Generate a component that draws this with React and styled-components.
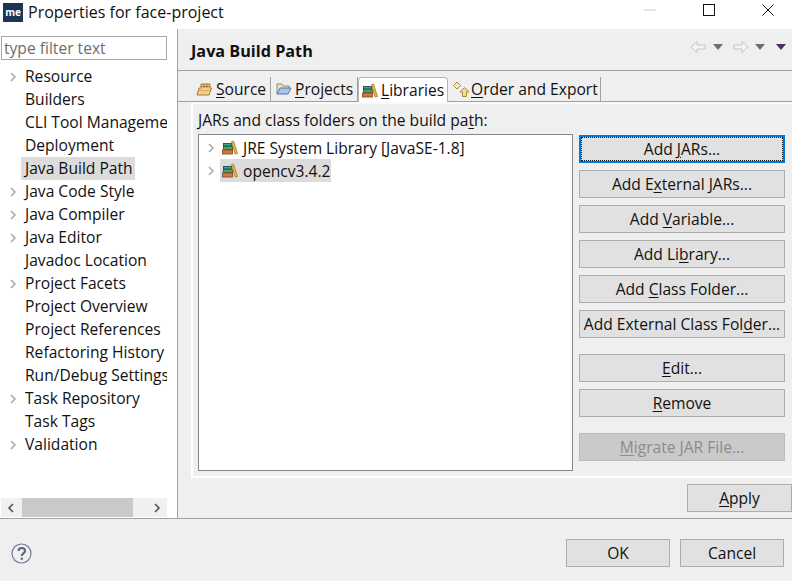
import React from 'react';
import styled, { createGlobalStyle } from 'styled-components';

const GlobalStyle = createGlobalStyle`
  html, body {
    margin: 0;
    padding: 0;
    background: #ffffff;
    font-family: "Open Sans", "Noto Sans", sans-serif;
    font-size: 15.6px;
    color: #111;
  }
  * { box-sizing: border-box; }
`;

const Dialog = styled.div`
  width: 792px;
  height: 581px;
  display: flex;
  flex-direction: column;
  overflow: hidden;
  background: #fff;
`;

// Title bar
const TitleBar = styled.div`
  height: 29px;
  flex: none;
  display: flex;
  align-items: center;
  padding-left: 3px;
  background: #fff;
`;

const AppBadge = styled.span`
  width: 20px;
  height: 19px;
  margin-top: -4px;
  background: #1d3557;
  color: #fff;
  font-size: 10px;
  font-weight: 700;
  line-height: 19px;
  text-align: center;
`;

const TitleText = styled.span`
  margin: -5px 0 0 5px;
  font-size: 16px;
`;

const WindowControls = styled.div`
  margin-left: auto;
  display: flex;
  align-items: center;
  height: 100%;
  padding-right: 18px;
  gap: 47px;
  margin-top: -9px;
`;

// Main split
const Main = styled.div`
  flex: 1;
  min-height: 0;
  display: flex;
  border-bottom: 1px solid #a0a0a0;
`;

const Sidebar = styled.div`
  width: 178px;
  flex: none;
  display: flex;
  flex-direction: column;
  border-right: 1px solid #a0a0a0;
  padding: 7px 10px 0 1px;
`;

const Filter = styled.div`
  height: 24px;
  flex: none;
  border: 1px solid #a8a8a8;
  padding-left: 2px;
  line-height: 22px;
  color: #6d6d6d;
`;

const Tree = styled.div`
  flex: 1;
  min-height: 0;
  overflow: hidden;
  padding-top: 5px;
`;

const NavRow = styled.div`
  height: 23px;
  display: flex;
  align-items: center;
  padding-left: 8px;
  white-space: nowrap;
`;

const Twisty = styled.svg`
  width: 8px;
  height: 10px;
  flex: none;
  margin-top: 1px;
`;

const NavLabel = styled.span`
  padding: ${p => (p.$selected ? '0 2px 0 4px' : '0')};
  margin-left: ${p => (p.$selected ? '12px' : p.$indent ? '16px' : '8px')};
  line-height: 23px;
  background: ${p => (p.$selected ? '#dcdcdc' : 'transparent')};
`;

const HScroll = styled.div`
  height: 19px;
  flex: none;
  background: #f0f0f0;
  display: flex;
  align-items: center;
  justify-content: space-between;
  position: relative;
  padding: 0 6px;
  margin-bottom: 1px;
`;

const HThumb = styled.div`
  position: absolute;
  left: 21px;
  top: 0;
  width: 111px;
  height: 19px;
  background: #c9c9c9;
`;

// Right pane
const Content = styled.div`
  flex: 1;
  min-width: 0;
  display: flex;
  flex-direction: column;
  background: #efefef;
`;

const Header = styled.div`
  height: 42px;
  flex: none;
  display: flex;
  align-items: center;
  justify-content: space-between;
  padding: 2px 6px 0 13px;
  border-bottom: 1px solid #a0a0a0;
`;

const HeaderTitle = styled.h2`
  margin: 0;
  font-size: 16.2px;
  font-weight: 700;
`;

const HeaderNav = styled.div`
  display: flex;
  align-items: center;
  margin-top: -8px;
`;

const NavSpacer = styled.span`
  width: 10px;
`;

const Tabs = styled.div`
  display: flex;
  align-items: stretch;
  height: 31px;
  flex: none;
  padding: 6px 0 0 13px;
  border-bottom: 1px solid #a0a0a0;
`;

const Tab = styled.div`
  display: flex;
  align-items: center;
  gap: ${p => p.$gap ?? 3}px;
  width: ${p => p.$width}px;
  padding-left: 5px;
  white-space: nowrap;
  position: relative;
  border-right: 1px solid ${p => (p.$active ? '#b4b4b4' : '#a0a0a0')};
  ${p => p.$active && `
    background: #fff;
    border: 1px solid #b4b4b4;
    border-bottom: none;
    border-radius: 4px 4px 0 0;
    height: 25px;
    padding-left: 3px;
  `}
`;

const TabPanel = styled.div`
  margin-left: 13px;
  height: 376px;
  flex: none;
  border: 2px solid #fff;
  border-right: none;
  border-top: 2px solid #fafafa;
  padding: 5px 0 0 5px;
  display: flex;
  flex-direction: column;
`;

const PanelLabel = styled.div`
  height: 20px;
  flex: none;
  line-height: 22px;
`;

const PanelBody = styled.div`
  flex: 1;
  display: flex;
  padding-bottom: 5px;
`;

const LibTree = styled.div`
  width: 375px;
  flex: none;
  margin-top: 5px;
  background: #fff;
  border: 1px solid #828790;
  padding-top: 1px;
`;

const LibRow = styled.div`
  height: 23px;
  display: flex;
  align-items: center;
  padding-left: 8px;
`;

const LibItem = styled.div`
  margin-left: 5px;
  height: 23px;
  display: flex;
  align-items: center;
  gap: 5px;
  padding: 0 1px 0 2px;
  background: ${p => (p.$selected ? '#dcdcdc' : 'transparent')};
`;

const ButtonColumn = styled.div`
  width: 206px;
  flex: none;
  margin-left: 6px;
  margin-top: 6px;
  display: flex;
  flex-direction: column;
  gap: 7px;
`;

const Btn = styled.div`
  height: 28px;
  flex: none;
  display: flex;
  align-items: center;
  justify-content: center;
  white-space: nowrap;
  background: ${p => (p.$disabled ? '#cacaca' : '#e1e1e1')};
  color: ${p => (p.$disabled ? '#8c8c8c' : '#111')};
  border: 1px solid ${p => (p.$disabled ? '#bcbcbc' : '#adadad')};
  margin-top: ${p => p.$gap || 0}px;
  width: ${p => (p.$width ? `${p.$width}px` : 'auto')};
  ${p => p.$focused && `
    border: 2px solid #0078d7;
    outline: 1px dotted #111;
    outline-offset: -3px;
  `}
`;

const ApplyRow = styled.div`
  flex: 1;
  display: flex;
  justify-content: flex-end;
  padding-top: 6px;
`;

// Footer
const Footer = styled.div`
  height: 62px;
  flex: none;
  background: #efefef;
  display: flex;
  align-items: flex-start;
  justify-content: space-between;
  padding: 20px 8px 0 11px;
`;

const FooterActions = styled.div`
  display: flex;
  gap: 10px;
`;

const HelpCircle = styled.svg`
  width: 21px;
  height: 21px;
  margin-top: 4px;
`;

const Key = styled.u`
  text-underline-offset: 2px;
`;

const NAV_ITEMS = [
  ['Resource', true], ['Builders'], ['CLI Tool Management'], ['Deployment'],
  ['Java Build Path', false, true], ['Java Code Style', true], ['Java Compiler', true],
  ['Java Editor', true], ['Javadoc Location'], ['Project Facets', true],
  ['Project Overview'], ['Project References'], ['Refactoring History'],
  ['Run/Debug Settings'], ['Task Repository', true], ['Task Tags'], ['Validation', true],
];

const Chevron = () => (
  <Twisty viewBox="0 0 8 10">
    <path d="M2 1l4 4-4 4" fill="none" stroke="#a8a8a8" strokeWidth="1.5" />
  </Twisty>
);

const LibraryIcon = () => (
  <svg width="16" height="15" viewBox="0 0 16 15" style={{ flex: 'none' }}>
    <rect x="1.500" y="3.500" width="8" height="2.500" fill="#3aa39a" stroke="#1f4f5c" strokeWidth="0.9" />
    <rect x="1.500" y="6.500" width="9" height="3" fill="#5aa05a" stroke="#35603c" strokeWidth="0.9" />
    <rect x="0.500" y="10" width="10" height="4" fill="#cf7a3c" stroke="#85512a" strokeWidth="0.9" />
    <path d="M9.500 1.500L11.500 1l4 12.500-2.500.5z" fill="#eeb64a" stroke="#a87a25" strokeWidth="0.8" />
  </svg>
);

const SourceIcon = () => (
  <svg width="17" height="16" viewBox="0 0 17 16" style={{ flex: 'none' }}>
    <path d="M3 7h2V3h9v4h1.500L13 14H1z" fill="#f3cf8a" stroke="#a87a35" strokeWidth="1" />
    <path d="M5 5.500h9M8 3v4M11 3v4" stroke="#a87a35" strokeWidth="1" fill="none" />
    <path d="M3 9.500h11" stroke="#d9ad68" strokeWidth="1" />
  </svg>
);

const FolderIcon = () => (
  <svg width="16" height="16" viewBox="0 0 16 16" style={{ flex: 'none' }}>
    <path d="M1 13V3h5l1 2h6v2" fill="#f4e3b4" stroke="#8e8a70" strokeWidth="1" />
    <path d="M1 13l3-6h11l-3 6z" fill="#a9c5ea" stroke="#4f75b5" strokeWidth="1" />
  </svg>
);

const OrderIcon = () => (
  <svg width="17" height="17" viewBox="0 0 17 17" style={{ flex: 'none' }}>
    <path d="M4 1l3.500 3.500L4 8 .5 4.500z" fill="#f8efc8" stroke="#a5863a" strokeWidth="1" />
    <path d="M11.500 6.500l4.500 4.500h-2.500v4.500h-4V11H7z" fill="#f7d98a" stroke="#b08a30" strokeWidth="1" />
  </svg>
);

const BackArrow = ({ flip }) => (
  <svg width="16" height="14" viewBox="0 0 16 14" style={{ transform: flip ? 'scaleX(-1)' : 'none' }}>
    <path d="M1 7l6-5.500V5h8v4H7v3.500z" fill="#f3f3f3" stroke="#c4c4c4" strokeWidth="1" />
  </svg>
);

const Drop = ({ color = '#6f6f6f', gap = 0 }) => (
  <svg width="10" height="6" viewBox="0 0 10 6" style={{ marginLeft: gap }}>
    <path d="M0 0h10L5 6z" fill={color} />
  </svg>
);

const App = () => (
  <>
    <GlobalStyle />
    <Dialog>
      <TitleBar>
        <AppBadge>me</AppBadge>
        <TitleText>Properties for face-project</TitleText>
        <WindowControls>
          <svg width="12" height="12" viewBox="0 0 12 12">
            <path d="M0 6h12" stroke="#c8c8c8" strokeWidth="1" />
          </svg>
          <svg width="12" height="12" viewBox="0 0 12 12">
            <rect x="0.500" y="0.500" width="11" height="11" fill="none" stroke="#111" />
          </svg>
          <svg width="12" height="12" viewBox="0 0 12 12">
            <path d="M.5.500l11 11M11.500.500l-11 11" stroke="#111" strokeWidth="1" />
          </svg>
        </WindowControls>
      </TitleBar>

      <Main>
        <Sidebar>
          <Filter>type filter text</Filter>
          <Tree>
            {NAV_ITEMS.map(([label, expandable, selected]) => (
              <NavRow key={label}>
                {expandable && <Chevron />}
                <NavLabel $indent={!expandable} $selected={selected}>{label}</NavLabel>
              </NavRow>
            ))}
          </Tree>
          <HScroll>
            <HThumb />
            <svg width="8" height="10" viewBox="0 0 8 10"><path d="M6 1L2 5l4 4" fill="none" stroke="#555" strokeWidth="1.600" /></svg>
            <svg width="8" height="10" viewBox="0 0 8 10"><path d="M2 1l4 4-4 4" fill="none" stroke="#555" strokeWidth="1.600" /></svg>
          </HScroll>
        </Sidebar>

        <Content>
          <Header>
            <HeaderTitle>Java Build Path</HeaderTitle>
            <HeaderNav>
              <BackArrow />
              <Drop gap={7} />
              <NavSpacer />
              <BackArrow flip />
              <Drop gap={6} />
              <Drop color="#4b2e6b" gap={11} />
            </HeaderNav>
          </Header>

          <Tabs>
            <Tab $width={80}><SourceIcon /><span><Key>S</Key>ource</span></Tab>
            <Tab $width={87}><FolderIcon /><span><Key>P</Key>rojects</span></Tab>
            <Tab $width={90} $active><LibraryIcon /><span><Key>L</Key>ibraries</span></Tab>
            <Tab $width={153} $gap={1}><OrderIcon /><span><Key>O</Key>rder and Export</span></Tab>
          </Tabs>

          <TabPanel>
            <PanelLabel>JARs and class folders on the build pa<Key>t</Key>h:</PanelLabel>
            <PanelBody>
              <LibTree>
                <LibRow><Chevron /><LibItem><LibraryIcon />JRE System Library [JavaSE-1.8]</LibItem></LibRow>
                <LibRow><Chevron /><LibItem $selected><LibraryIcon />opencv3.4.2</LibItem></LibRow>
              </LibTree>
              <ButtonColumn>
                <Btn $focused><span>Add <Key>J</Key>ARs...</span></Btn>
                <Btn><span>Add E<Key>x</Key>ternal JARs...</span></Btn>
                <Btn><span>Add <Key>V</Key>ariable...</span></Btn>
                <Btn><span>Add Li<Key>b</Key>rary...</span></Btn>
                <Btn><span>Add <Key>C</Key>lass Folder...</span></Btn>
                <Btn><span>Add External Class Fol<Key>d</Key>er...</span></Btn>
                <Btn $gap={9}><span><Key>E</Key>dit...</span></Btn>
                <Btn><span><Key>R</Key>emove</span></Btn>
                <Btn $gap={9} $disabled><span><Key>M</Key>igrate JAR File...</span></Btn>
              </ButtonColumn>
            </PanelBody>
          </TabPanel>

          <ApplyRow>
            <Btn $width={105}><span><Key>A</Key>pply</span></Btn>
          </ApplyRow>
        </Content>
      </Main>

      <Footer>
        <HelpCircle viewBox="0 0 21 21">
          <circle cx="10.500" cy="10.500" r="9.500" fill="none" stroke="#6f7f9a" strokeWidth="1.200" />
          <path d="M7.500 8c0-4 6.500-4 6.500 0 0 2.500-3.200 2.300-3.200 5" fill="none" stroke="#56657f" strokeWidth="2" />
          <circle cx="10.800" cy="15.800" r="1.200" fill="#56657f" />
        </HelpCircle>
        <FooterActions>
          <Btn $width={104}>OK</Btn>
          <Btn $width={104}>Cancel</Btn>
        </FooterActions>
      </Footer>
    </Dialog>
  </>
);

export default App;
